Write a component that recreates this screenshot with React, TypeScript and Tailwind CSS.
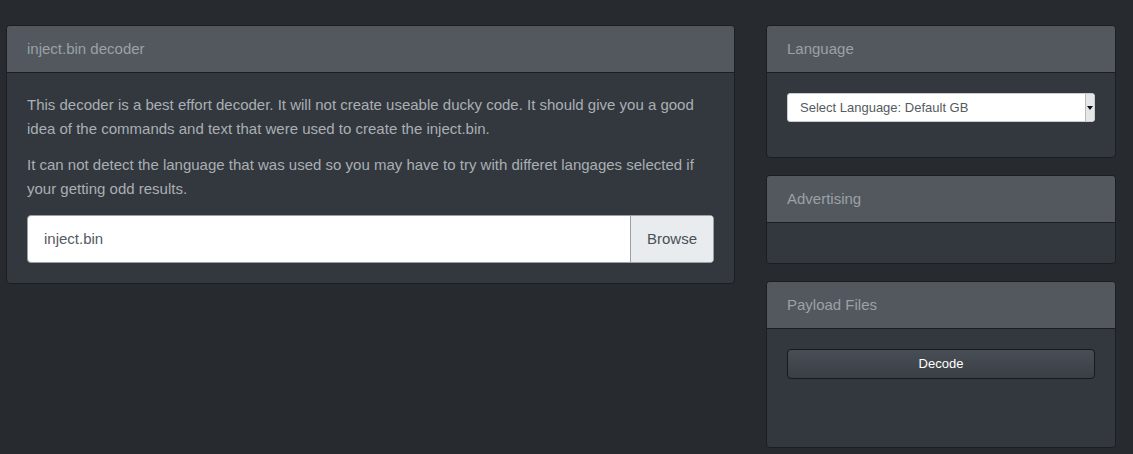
import type { ReactNode } from 'react';

const Panel = ({ title, children, bodyClass = '' }: { title: string; children?: ReactNode; bodyClass?: string }) => (
  <div className="rounded-[4px] border border-[#1c1e22] bg-[#32383e] overflow-hidden">
    <div className="h-[47px] flex items-center px-[20px] bg-[#52585e] border-b border-[#1c1e22] text-[15px] text-[#9ba1a6]">
      {title}
    </div>
    <div className={`px-[20px] py-[20px] ${bodyClass}`}>{children}</div>
  </div>
);

const App = () => {
  return (
    <div className="min-h-[454px] bg-[#272b30] font-['Liberation_Sans',Arial,sans-serif] pt-[25px] pl-[6px] pr-[17px]">
      <div className="flex gap-[31px] items-start">
        <div className="w-[729px]">
          <Panel title="inject.bin decoder">
            <p className="text-[15px] leading-[24px] text-[#aaafb4] mb-[12px]">
              This decoder is a best effort decoder. It will not create useable ducky code. It should give you a good
              idea of the commands and text that were used to create the inject.bin.
            </p>
            <p className="text-[15px] leading-[24px] text-[#aaafb4] mb-[14px]">
              It can not detect the language that was used so you may have to try with differet langages selected if
              your getting odd results.
            </p>
            <div className="flex h-[48px] rounded-[4px] border border-[#9aa0a6] bg-white overflow-hidden">
              <div className="flex-1 flex items-center px-[16px] text-[15px] text-[#555b61]">inject.bin</div>
              <div className="w-[83px] flex items-center justify-center bg-[#e9ecef] border-l border-[#9aa0a6] text-[15px] text-[#495057]">
                Browse
              </div>
            </div>
          </Panel>
        </div>

        <div className="w-[350px] flex flex-col gap-[17px]">
          <Panel title="Language" bodyClass="pb-[35px]">
            <div className="h-[29px] flex rounded-[3px] border border-[#c8ccd0] bg-white overflow-hidden">
              <div className="flex-1 flex items-center pl-[12px] text-[13px] text-[#555b61]">
                Select Language: Default GB
              </div>
              <div className="w-[9px] flex items-center justify-center bg-[#e4e6e8] border-l border-[#b8bcc0]">
                <svg width="6" height="4" viewBox="0 0 6 4">
                  <path d="M0 0 L6 0 L3 4 Z" fill="#111" />
                </svg>
              </div>
            </div>
          </Panel>

          <Panel title="Advertising" bodyClass="h-[40px]" />

          <Panel title="Payload Files" bodyClass="h-[118px]">
            <button className="w-full h-[30px] rounded-[4px] border border-[#17191c] bg-gradient-to-b from-[#484e55] to-[#3a3f44] text-[13px] text-white">
              Decode
            </button>
          </Panel>
        </div>
      </div>
    </div>
  );
};

export default App;
